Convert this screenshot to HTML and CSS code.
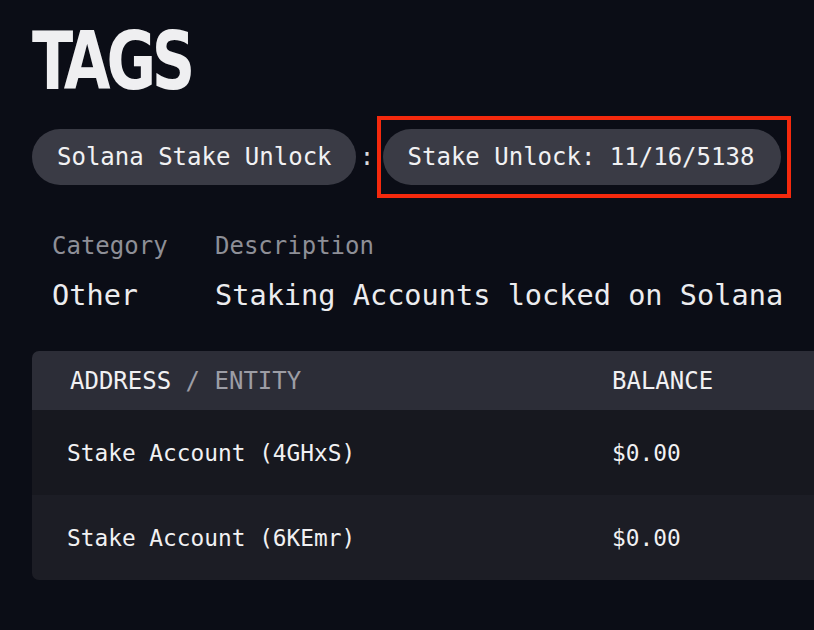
FILE: index.html
```html
<!DOCTYPE html>
<html lang="en">
<head>
    <meta charset="UTF-8">
    <meta name="viewport" content="width=device-width, initial-scale=1.0">
    <title>Tags</title>
    <link rel="stylesheet" href="styles.css">
</head>
<body>
    <div class="page">
        <h1 class="page-title">TAGS</h1>

        <div class="tag-row">
            <span class="tag-pill">Solana Stake Unlock</span>
            <span class="tag-sep">:</span>
            <div class="tag-highlight">
                <span class="tag-pill wide">Stake Unlock: 11/16/5138</span>
            </div>
        </div>

        <div class="meta">
            <p class="meta-label">Category</p>
            <p class="meta-label">Description</p>
            <p class="meta-value">Other</p>
            <p class="meta-value">Staking Accounts locked on Solana</p>
        </div>

        <div class="holders">
            <div class="holders-head">
                <div class="col-entity">ADDRESS <span class="muted">/ ENTITY</span></div>
                <div class="col-balance">BALANCE</div>
            </div>
            <div class="holders-row">
                <div class="col-entity">Stake Account (4GHxS)</div>
                <div class="col-balance">$0.00</div>
            </div>
            <div class="holders-row alt">
                <div class="col-entity">Stake Account (6KEmr)</div>
                <div class="col-balance">$0.00</div>
            </div>
        </div>
    </div>
</body>
</html>
```

FILE: styles.css
```css
html {
    background-color: #0b0d16;
    color: #f1f1f3;
    font-family: "DejaVu Sans Mono", "Liberation Mono", monospace;
}

body {
    margin: 0;
    padding: 0;
    overflow: hidden;
}

.page {
    padding: 22px 0 0 32px;
}

.page-title {
    margin: 0;
    font-family: "DejaVu Sans Condensed", "Liberation Sans", sans-serif;
    font-weight: 700;
    font-size: 80px;
    line-height: 80px;
    letter-spacing: -5px;
    color: #efeff1;
    transform: scaleX(0.84);
    transform-origin: left center;
}

.tag-row {
    display: flex;
    align-items: center;
    margin-top: 14px;
}

.tag-pill {
    display: flex;
    align-items: center;
    height: 56px;
    padding: 0 24px 0 25px;
    border-radius: 28px;
    background-color: #3a3b45;
    font-size: 24px;
    white-space: nowrap;
}

.tag-pill.wide {
    padding-right: 27px;
}

.tag-sep {
    width: 23px;
    text-align: center;
    font-size: 24px;
    color: #d8d8dc;
}

.tag-highlight {
    display: flex;
    padding: 9px 6px 9px 2px;
    border: 4px solid #f5290d;
    margin-left: -2px;
}

.meta {
    display: grid;
    grid-template-columns: 163px auto;
    padding-left: 20px;
    margin-top: 31px;
}

.meta p {
    margin: 0;
    white-space: nowrap;
}

.meta-label {
    font-size: 24px;
    line-height: 34px;
    color: #8e8f97;
}

.meta-value {
    margin-top: 15px !important;
    font-size: 28.6px;
    line-height: 34px;
    color: #ececef;
}

.holders {
    margin-top: 39px;
    border-radius: 7px 0 0 7px;
    overflow: hidden;
}

.holders-head,
.holders-row {
    display: flex;
    align-items: center;
}

.holders-head {
    height: 59px;
    background-color: #2c2d37;
    font-size: 24px;
}

.holders-head .col-entity {
    padding-left: 38px;
}

.holders-row {
    height: 85px;
    background-color: #17181f;
    font-size: 22.8px;
}

.holders-row.alt {
    background-color: #1c1d25;
}

.holders-row .col-entity {
    padding-left: 35px;
}

.col-entity {
    width: 580px;
    flex-shrink: 0;
    box-sizing: border-box;
    white-space: nowrap;
}

.muted {
    color: #9c9da5;
}
```
